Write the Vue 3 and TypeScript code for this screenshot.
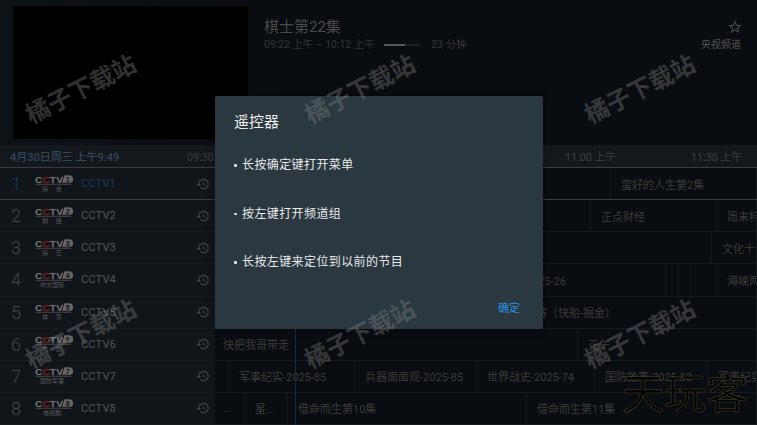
<script setup lang="ts">
interface Cell {
  start: number;
  text: string;
}

interface Channel {
  num: number;
  name: string;
  sub: string;
  cells: Cell[];
}

const GRID_RIGHT = 757;

const times = ['09:30 上午', '10:00 上午', '10:30 上午', '11:00 上午', '11:30 上午'];
const tips = ['长按确定键打开菜单', '按左键打开频道组', '长按左键来定位到以前的节目'];
const marks = [1, 2, 3, 4, 5, 6];

const channels: Channel[] = [
  { num: 1, name: 'CCTV1', sub: '综 合', cells: [{ start: 215, text: '' }, { start: 611, text: '蛮好的人生第2集' }] },
  { num: 2, name: 'CCTV2', sub: '财 经', cells: [{ start: 215, text: '' }, { start: 591, text: '正点财经' }, { start: 717, text: '周末特供' }] },
  { num: 3, name: 'CCTV3', sub: '综 艺', cells: [{ start: 215, text: '' }, { start: 712, text: '文化十分' }] },
  {
    num: 4,
    name: 'CCTV4',
    sub: '中文国际',
    cells: [
      { start: 215, text: '' },
      { start: 469, text: '今日亚洲-2025-26' },
      { start: 666, text: '' },
      { start: 679, text: '' },
      { start: 691, text: '' },
      { start: 717, text: '海峡两岸' },
    ],
  },
  { num: 5, name: 'CCTV5', sub: '体 育', cells: [{ start: 215, text: '' }, { start: 482, text: 'NBA季后赛（快船-掘金）' }] },
  { num: 6, name: 'CCTV6', sub: '电 影', cells: [{ start: 215, text: '快把我哥带走' }, { start: 578, text: '正午' }] },
  {
    num: 7,
    name: 'CCTV7',
    sub: '国防军事',
    cells: [
      { start: 215, text: '' },
      { start: 229, text: '军事纪实-2025-85' },
      { start: 355, text: '兵器面面观-2025-85' },
      { start: 477, text: '世界战史-2025-74' },
      { start: 595, text: '国防故事-2025-53' },
      { start: 708, text: '军事纪实' },
    ],
  },
  {
    num: 8,
    name: 'CCTV8',
    sub: '电视剧',
    cells: [
      { start: 215, text: '…' },
      { start: 245, text: '星…' },
      { start: 288, text: '借命而生第10集' },
      { start: 527, text: '借命而生第11集' },
    ],
  },
];

// width of a programme block, up to the next block or the screen edge
function cellWidth(cells: Cell[], i: number): number {
  const end = i + 1 < cells.length ? cells[i + 1].start : GRID_RIGHT;
  return end - cells[i].start;
}
</script>

<template>
  <div class="screen">
    <section class="top">
      <div class="video"></div>
      <div class="info">
        <h1 class="title">棋士第22集</h1>
        <div class="meta">
          <span>09:22 上午 – 10:12 上午</span>
          <span class="progress"><span class="progress-fill"></span></span>
          <span>23 分钟</span>
        </div>
      </div>
      <div class="side">
        <svg class="star" viewBox="0 0 24 24" width="16" height="16">
          <path
            fill="#4a4a4a"
            d="M22 9.24l-7.19-.62L12 2 9.19 8.63 2 9.24l5.46 4.73L5.82 21 12 17.27 18.18 21l-1.63-7.03L22 9.24zM12 15.4l-3.76 2.27 1-4.28-3.32-2.88 4.38-.38L12 6.1l1.71 4.04 4.38.38-3.32 2.88 1 4.28L12 15.4z"
          />
        </svg>
        <span class="group">央视频道</span>
      </div>
    </section>

    <div class="timeline">
      <div class="date">4月30日周三 上午9:49</div>
      <div class="times">
        <span v-for="t in times" :key="t" class="time">{{ t }}</span>
      </div>
    </div>

    <div class="guide">
      <div v-for="ch in channels" :key="ch.num" class="row" :class="{ selected: ch.num === 1 }">
        <div class="channel">
          <span class="num">{{ ch.num }}</span>
          <svg class="logo" viewBox="0 0 38 18" width="38" height="18">
            <text x="0" y="7.6" class="logo-cctv" textLength="28" lengthAdjust="spacingAndGlyphs">
              <tspan fill="#767676">C</tspan><tspan fill="#7f1d1d">C</tspan><tspan fill="#767676">TV</tspan>
            </text>
            <path d="M29.5 0.2h4.8a3.8 3.8 0 0 1 0 7.6H27z" fill="#666" />
            <text x="32.6" y="6.6" class="logo-num">{{ ch.num }}</text>
            <rect x="0" y="8.8" width="36" height="0.8" fill="#555" />
            <text x="17" y="16.4" class="logo-sub">{{ ch.sub }}</text>
          </svg>
          <span class="name">{{ ch.name }}</span>
          <svg class="history" viewBox="0 0 24 24" width="14" height="14">
            <path
              fill="#454545"
              d="M13 3a9 9 0 0 0-9 9H1l3.89 3.89.07.14L9 12H6c0-3.87 3.13-7 7-7s7 3.13 7 7-3.13 7-7 7c-1.93 0-3.68-.79-4.94-2.06l-1.42 1.42A8.954 8.954 0 0 0 13 21a9 9 0 0 0 0-18zm-1 5v5l4.28 2.54.72-1.21-3.5-2.08V8H12z"
            />
          </svg>
        </div>
        <div class="cells">
          <div
            v-for="(cell, i) in ch.cells"
            :key="cell.start"
            class="cell"
            :style="{ width: cellWidth(ch.cells, i) + 'px' }"
          >
            {{ cell.text }}
          </div>
        </div>
      </div>
      <div class="now-line"></div>
    </div>

    <div class="dialog">
      <h2 class="dialog-title">遥控器</h2>
      <ul class="tips">
        <li v-for="tip in tips" :key="tip" class="tip">{{ tip }}</li>
      </ul>
      <div class="dialog-actions"><span class="ok">确定</span></div>
    </div>

    <div class="marks">
      <span v-for="m in marks" :key="m" class="mark">橘子下载站</span>
    </div>
    <div class="brand">天玩客</div>
  </div>
</template>

<style scoped>
.screen {
  position: relative;
  width: 757px;
  height: 425px;
  overflow: hidden;
  display: flex;
  flex-direction: column;
  background: #090c10;
  font-family: Roboto, "Noto Sans CJK SC", sans-serif;
}

.top {
  height: 145px;
  box-sizing: border-box;
  padding: 6px 16px 6px 13px;
  display: flex;
  background: linear-gradient(90deg, #0d1217 0, #090c10 40%);
}

.video {
  width: 235px;
  height: 133px;
  background: #000;
}

.info {
  flex: 1;
  padding: 12px 0 0 16px;
}

.title {
  margin: 0;
  font-size: 15px;
  line-height: 18px;
  font-weight: 400;
  color: #4a4a4a;
}

.meta {
  margin-top: 2px;
  display: flex;
  align-items: center;
  gap: 10px;
  font-size: 10.4px;
  line-height: 14px;
  color: #363636;
}

.progress {
  width: 37px;
  height: 2px;
  background: #1e1e1e;
}

.progress-fill {
  display: block;
  width: 21px;
  height: 2px;
  background: #555;
}

.side {
  padding-top: 13px;
  display: flex;
  flex-direction: column;
  align-items: flex-end;
}

.star {
  margin-right: -2px;
}

.group {
  margin-top: 3px;
  font-size: 10px;
  line-height: 14px;
  color: #555;
}

.timeline {
  height: 23px;
  box-sizing: border-box;
  display: flex;
  align-items: center;
  overflow: hidden;
  background: #14181d;
  border-bottom: 1px solid #383d42;
  font-size: 10.8px;
}

.date {
  width: 187px;
  flex: none;
  padding-left: 10px;
  box-sizing: border-box;
  font-size: 11px;
  font-weight: 500;
  color: #33475c;
}

.times {
  display: flex;
  flex: none;
}

.time {
  width: 126px;
  flex: none;
  color: #3d3d3d;
}

.guide {
  position: relative;
  flex: 1;
  display: flex;
  flex-direction: column;
}

.row {
  flex: 1;
  min-height: 0;
  display: flex;
  box-sizing: border-box;
  border-bottom: 1px solid #171b20;
}

.row.selected {
  border-bottom-color: #383d42;
}

.channel {
  width: 215px;
  flex: none;
  box-sizing: border-box;
  display: flex;
  align-items: center;
  background: #11151a;
  padding-left: 11px;
}

.num {
  width: 24px;
  font-size: 18px;
  font-weight: 300;
  color: #474747;
}

.selected .num,
.selected .name {
  color: #123c60;
}

.logo {
  flex: none;
}

.logo-cctv {
  font: 700 9.5px "Liberation Sans", sans-serif;
}

.logo-num {
  font: 700 7px "Liberation Sans", sans-serif;
  fill: #121212;
  text-anchor: middle;
}

.logo-sub {
  font: 400 6px "Noto Sans CJK SC", sans-serif;
  fill: #5c5c5c;
  text-anchor: middle;
  word-spacing: 6px;
}

.name {
  margin-left: 8px;
  width: 113px;
  font-size: 11px;
  letter-spacing: 0.2px;
  color: #565656;
}

.history {
  flex: none;
  margin-left: 2px;
}

.cells {
  flex: 1;
  min-width: 0;
  display: flex;
  overflow: hidden;
}

.cell {
  flex: none;
  box-sizing: border-box;
  padding-left: 10px;
  display: flex;
  align-items: center;
  overflow: hidden;
  white-space: nowrap;
  font-size: 11px;
  color: #3b3b3b;
  border-right: 1px solid #15191d;
}

.cell:first-child {
  padding-left: 8px;
}

.now-line {
  position: absolute;
  left: 295px;
  top: 0;
  bottom: 0;
  width: 1px;
  background: #1a2a3a;
}

.dialog {
  position: absolute;
  left: 215px;
  top: 96px;
  width: 328px;
  height: 233px;
  box-sizing: border-box;
  padding: 16px 23px 12px 19px;
  display: flex;
  flex-direction: column;
  background: #2b3840;
  border-radius: 2px;
  box-shadow: 0 0 8px rgba(0, 0, 0, 0.3);
}

.dialog-title {
  margin: 0;
  font-size: 15px;
  line-height: 20px;
  font-weight: 400;
  color: #eef0f1;
}

.tips {
  list-style: none;
  margin: 0;
  padding: 0;
  flex: 1;
}

.tip {
  position: relative;
  padding-left: 8px;
  font-size: 12px;
  line-height: 18px;
  letter-spacing: 0.4px;
  color: #e8eaeb;
  margin-top: 30.5px;
}

.tip:first-child {
  margin-top: 24px;
}

.tip::before {
  content: "";
  position: absolute;
  left: 0;
  top: 8px;
  width: 2.5px;
  height: 2.5px;
  border-radius: 50%;
  background: #e8eaeb;
}

.dialog-actions {
  display: flex;
  justify-content: flex-end;
}

.ok {
  font-size: 11px;
  line-height: 16px;
  color: #2a8fe0;
}

.marks {
  position: absolute;
  left: -60px;
  top: -35.5px;
  display: grid;
  grid-template-columns: repeat(3, 279.5px);
  grid-auto-rows: 245px;
  place-items: center;
  pointer-events: none;
}

.mark {
  font-size: 24px;
  font-weight: 700;
  white-space: nowrap;
  color: rgba(128, 128, 128, 0.4);
  transform: rotate(-27deg);
}

.brand {
  position: absolute;
  right: 9px;
  bottom: 8px;
  font-size: 42px;
  line-height: 44px;
  color: #050505;
  -webkit-text-stroke: 0.5px #4e4520;
  pointer-events: none;
}
</style>
